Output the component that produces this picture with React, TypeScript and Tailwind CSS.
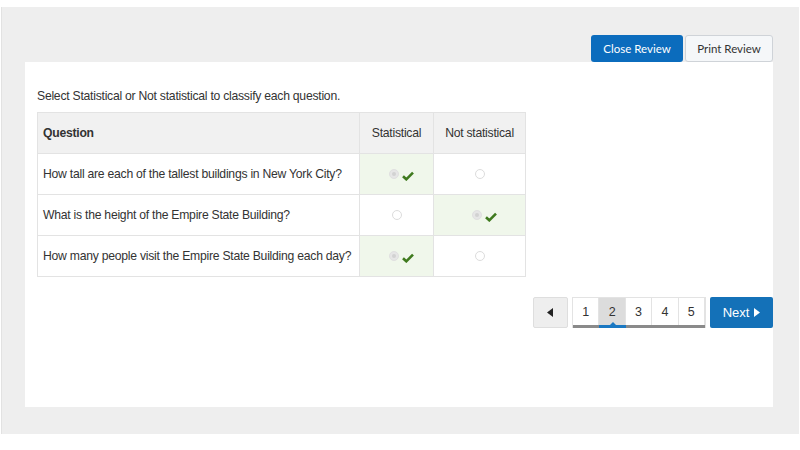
import React from 'react'

const rows = [
  { q: 'How tall are each of the tallest buildings in New York City?', answer: 0 },
  { q: 'What is the height of the Empire State Building?', answer: 1 },
  { q: 'How many people visit the Empire State Building each day?', answer: 0 },
]

function Check() {
  return (
    <svg width="12" height="10" viewBox="0 0 12 10" className="ml-[3px] mt-[3px]">
      <path d="M1 5.2 L4.3 8.3 L11 1.6" fill="none" stroke="#3f7a1e" strokeWidth="2.6" />
    </svg>
  )
}

function Radio({ checked }: { checked: boolean }) {
  if (checked) {
    return (
      <span className="flex h-[10px] w-[10px] items-center justify-center rounded-full bg-[#e6e6e6] border border-[#e0e0e0]">
        <span className="h-[4px] w-[4px] rounded-full bg-[#d2d2d2]" />
      </span>
    )
  }
  return <span className="h-[10px] w-[10px] rounded-full border border-[#dcdcdc] bg-white" />
}

function Cell({ checked }: { checked: boolean }) {
  return (
    <td className={`border border-[#e3e3e3] ${checked ? 'bg-[#f0f7eb]' : 'bg-white'}`}>
      <div className="flex items-center justify-center">
        <div className={checked ? 'ml-[10px] flex items-center' : 'flex items-center'}>
          <Radio checked={checked} />
          {checked && <Check />}
        </div>
      </div>
    </td>
  )
}

export default function App() {
  return (
    <div className="h-[450px] w-[800px] bg-white pt-[7px] pl-[1px] pr-[1px] font-['Liberation_Sans',Arial,sans-serif]">
      <div className="h-[427px] bg-[#eeeeee] pl-[23px] pr-[26px] border-l border-[#e2e2e2]">
        <div className="flex h-[55px] items-end justify-end gap-[2px]">
          <button className="h-[27px] w-[92px] rounded-[3px] bg-[#0b6cbd] text-[11.5px] text-white font-['Lato',sans-serif]">
            Close Review
          </button>
          <button className="h-[27px] w-[88px] rounded-[3px] border border-[#cfd3d8] bg-[#f5f7f9] text-[11.5px] text-[#333] font-['Lato',sans-serif]">
            Print Review
          </button>
        </div>
        <div className="h-[345px] bg-white pl-3 pt-[26px] text-[12.2px] tracking-[-0.25px]">
          <p className="leading-[16px] text-[#333]">Select Statistical or Not statistical to classify each question.</p>
          <table className="mt-[8px] w-[489px] table-fixed border-collapse text-[#333]">
            <thead>
              <tr className="h-[41px] bg-[#f1f1f1]">
                <th className="w-[322px] border border-[#e3e3e3] px-[5px] text-left font-bold">Question</th>
                <th className="w-[74px] border border-[#e3e3e3] font-normal">Statistical</th>
                <th className="border border-[#e3e3e3] font-normal">Not statistical</th>
              </tr>
            </thead>
            <tbody>
              {rows.map((r, i) => (
                <tr key={i} className="h-[41px]">
                  <td className="whitespace-nowrap border border-[#e3e3e3] px-[5px]">{r.q}</td>
                  <Cell checked={r.answer === 0} />
                  <Cell checked={r.answer === 1} />
                </tr>
              ))}
            </tbody>
          </table>

          <div className="mt-[20px] flex items-start justify-end tracking-normal">
            <button className="flex h-[31px] w-[35px] items-center justify-center rounded-[2px] border border-[#dedede] bg-[#eeeeee]">
              <svg width="7" height="9" viewBox="0 0 7 9">
                <path d="M6 0 L0 4.5 L6 9 Z" fill="#222" />
              </svg>
            </button>
            <div className="relative ml-1 flex h-[31px] w-[134px] border border-[#e3e3e3] text-[12.5px] text-[#333]">
              {[1, 2, 3, 4, 5].map(n => (
                <div
                  key={n}
                  className={`flex flex-1 items-center justify-center border-r border-[#e3e3e3] last:border-r-0 ${n === 2 ? 'bg-[#dcdcdc]' : 'bg-white'}`}
                >
                  {n}
                </div>
              ))}
              <div className="absolute bottom-[-1px] left-0 right-0 h-[3px] bg-[#8a8a8a]" />
              <div className="absolute bottom-[-1px] left-[26px] h-[3px] w-[27px] bg-[#1a78c2]" />
              <div className="absolute bottom-[2px] left-[37px] h-0 w-0 border-x-[3px] border-b-[3px] border-x-transparent border-b-[#1a78c2]" />
            </div>
            <button className="ml-1 flex h-[31px] w-[63px] items-center justify-center gap-[5px] rounded-[2px] bg-[#1471b8] text-[13px] text-white">
              Next
              <svg width="6" height="9" viewBox="0 0 6 9">
                <path d="M0 0 L6 4.5 L0 9 Z" fill="#fff" />
              </svg>
            </button>
          </div>
        </div>
      </div>
    </div>
  )
}
